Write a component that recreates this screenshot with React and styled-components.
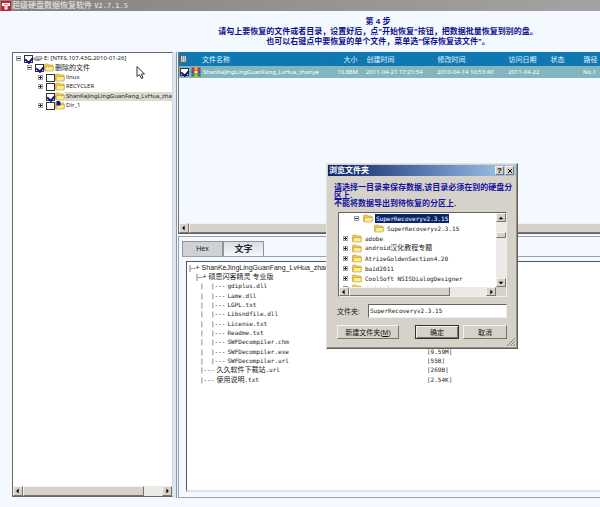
import styled, { createGlobalStyle, css } from "styled-components";

const SANS = '"Liberation Sans", "Noto Sans CJK SC", sans-serif';
const TAHOMA = '"Noto Sans", "Noto Sans CJK SC", sans-serif';
const SONG = '"DejaVu Sans Mono", "Noto Sans CJK SC", monospace';

const treeNodes = [
    { id: "e", depth: 0, toggle: "minus", checked: true, icon: "disk", label: "E: [NTFS,107.43G,2010-01-26]" },
    { id: "deleted", depth: 1, toggle: "minus", checked: true, icon: "folder", label: <Han>删除的文件</Han> },
    { id: "linux", depth: 2, toggle: "plus", icon: "folder", label: "linux" },
    { id: "recycler", depth: 2, toggle: "plus", icon: "folder", label: "RECYCLER" },
    { id: "shan", depth: 2, checked: true, selected: true, icon: "folder", label: "ShanKeJingLingGuanFang_LvHua_zha" },
    { id: "dir1", depth: 2, toggle: "plus", icon: "lost", label: "Dir_1" },
];

const previewLines = [
    { indent: 0, branch: "|--+", folder: true, name: "ShanKeJingLingGuanFang_LvHua_zhan" },
    { indent: 7, branch: "|--+", folder: true, name: <Han>硕思闪客精灵 专业版</Han> },
    { indent: 11, pipe: true, branch: "|---", name: "gdiplus.dll" },
    { indent: 11, pipe: true, branch: "|---", name: "Lame.dll" },
    { indent: 11, pipe: true, branch: "|---", name: "LGPL.txt" },
    { indent: 11, pipe: true, branch: "|---", name: "Libsndfile.dll" },
    { indent: 11, pipe: true, branch: "|---", name: "License.txt" },
    { indent: 11, pipe: true, branch: "|---", name: "Readme.txt" },
    { indent: 11, pipe: true, branch: "|---", name: "SWFDecompiler.chm" },
    { indent: 11, pipe: true, branch: "|---", name: "SWFDecompiler.exe", size: "[9.59M]" },
    { indent: 11, pipe: true, branch: "|---", name: "SWFDecompiler.url", size: "[55B]" },
    { indent: 11, branch: "|---", name: <><Han>久久软件下载站</Han>.url</>, size: "[269B]" },
    { indent: 11, branch: "|---", name: <><Han>使用说明</Han>.txt</>, size: "[2.54K]" },
];

const folders = [
    { id: "sr", depth: 1, toggle: "minus", label: "SuperRecoveryv2.3.15", selected: true },
    { id: "sr2", depth: 2, label: "SuperRecoveryv2.3.15" },
    { id: "adobe", depth: 0, toggle: "plus", label: "adobe" },
    { id: "android", depth: 0, toggle: "plus", label: <>android<Han>汉化教程专题</Han></> },
    { id: "atrize", depth: 0, toggle: "plus", label: "AtrizeGoldenSection4.20" },
    { id: "baid", depth: 0, toggle: "plus", label: "baid2011" },
    { id: "cool", depth: 0, toggle: "plus", label: "CoolSoft NSISDialogDesigner" },
    { id: "dsdata", depth: 0, toggle: "plus", label: "dsdata1" },
];

function Han({ children }) {
    return <HanText>{children}</HanText>;
}

function FolderIcon({ lost }) {
    return (
        <svg width="10" height="9" viewBox="0 0 20 18" aria-hidden="true">
            <path d="M1 4 Q1 2 3 2 H8 L10 4 H17 Q18 4 18 6 V15 H2 Q1 15 1 14 Z" fill="#f0cf52" stroke="#a88a2a" />
            <path d="M3 7 H19 L18 16 H2 Z" fill="#fdec8a" stroke="#a88a2a" />
            {lost && <path d="M3 0 H9 L11 3 V9 H3 Z" fill="#14148c" />}
        </svg>
    );
}

function DiskIcon() {
    return (
        <svg width="10" height="9" viewBox="0 0 20 18" aria-hidden="true">
            <path d="M1 9 L6 5 H17 L19 9 L13 13 H4 Z" fill="#c9c9c9" stroke="#7a7a7a" />
            <path d="M2 10 L13 11 L19 9" fill="none" stroke="#5a5a5a" />
            <path d="M9 12 H12" stroke="#2c7a2c" strokeWidth="2" />
        </svg>
    );
}

function ArchiveIcon() {
    return (
        <svg width="10" height="10" viewBox="0 0 20 20" aria-hidden="true">
            <rect x="1" y="1" width="18" height="6" fill="#c2323c" />
            <rect x="1" y="7" width="18" height="6" fill="#2c50b4" />
            <rect x="1" y="13" width="18" height="6" fill="#2a8c3c" />
            <rect x="7" y="0" width="6" height="20" fill="#e8a83c" />
            <rect x="6" y="7" width="8" height="6" fill="#f6e08a" stroke="#8a5a18" />
        </svg>
    );
}

function Arrow({ dir }) {
    const paths = {
        left: "M6 1 V9 L2 5 Z",
        right: "M4 1 V9 L8 5 Z",
        up: "M1 7 H9 L5 3 Z",
        down: "M1 3 H9 L5 7 Z",
    };
    return (
        <svg width="6" height="6" viewBox="0 0 10 10" aria-hidden="true">
            <path d={paths[dir]} fill="#000" />
        </svg>
    );
}

function HScroll({ grow, rest, open }) {
    return (
        <ScrollTrack>
            <ScrollButton aria-label="向左滚动"><Arrow dir="left" /></ScrollButton>
            <Thumb $grow={grow} $open={open} />
            {!open && (
                <>
                    <TrackRest $grow={rest} />
                    <ScrollButton aria-label="向右滚动"><Arrow dir="right" /></ScrollButton>
                </>
            )}
        </ScrollTrack>
    );
}

function DriveTree() {
    return (
        <TreePanel>
            <TreeList>
                {treeNodes.map((n) => (
                    <TreeRow key={n.id} $depth={n.depth}>
                        {n.toggle ? <Toggle aria-label="展开" $plus={n.toggle === "plus"} /> : <ToggleGap />}
                        <TreeLabel>
                            <Check type="checkbox" defaultChecked={n.checked} />
                            {n.icon === "disk" ? <DiskIcon /> : <FolderIcon lost={n.icon === "lost"} />}
                            <TreeText $selected={n.selected}>{n.label}</TreeText>
                        </TreeLabel>
                    </TreeRow>
                ))}
            </TreeList>
            <HScroll grow={123} rest={19} />
        </TreePanel>
    );
}

function FileList() {
    return (
        <ListPanel>
            <TableArea>
                <FileTable>
                    <colgroup>
                        <col width="11" />
                        <col width="134" />
                        <col width="38" />
                        <col width="71" />
                        <col width="71" />
                        <col width="42" />
                        <col width="35" />
                        <col />
                    </colgroup>
                    <thead>
                        <tr>
                            <th><HeadMark aria-label="全选" /></th>
                            <th><NameHead>文件名称</NameHead></th>
                            <NumHead>大小</NumHead>
                            <th>创建时间</th>
                            <th>修改时间</th>
                            <th>访问日期</th>
                            <th>状态</th>
                            <PathHead>路径</PathHead>
                        </tr>
                    </thead>
                    <tbody>
                        <tr>
                            <td><Check type="checkbox" defaultChecked aria-label="选择文件" /></td>
                            <td>
                                <NameCell>
                                    <ArchiveIcon />
                                    ShanKeJingLingGuanFang_LvHua_zhanye
                                </NameCell>
                            </td>
                            <NumCell>10.88M</NumCell>
                            <td>2011-04-21 17:21:54</td>
                            <td>2010-04-14 10:53:40</td>
                            <td>2011-04-22</td>
                            <td />
                            <PathCell>No.1</PathCell>
                        </tr>
                    </tbody>
                </FileTable>
            </TableArea>
            <HScroll grow={1} open />
        </ListPanel>
    );
}

function Preview() {
    return (
        <PreviewPanel>
            <Tabs role="tablist">
                <Tab role="tab" aria-selected="false">Hex</Tab>
                <Tab role="tab" aria-selected="true" $active>文字</Tab>
            </Tabs>
            <TabPage>
                <TextBox>
                    {previewLines.map((l, i) => (
                        <TextLine key={i}>
                            <LineName $indent={l.indent} $folder={l.folder}>
                                {l.pipe && <Pipe>|</Pipe>}
                                <Branch>{l.branch}</Branch>
                                {l.name}
                            </LineName>
                            <span>{l.size}</span>
                        </TextLine>
                    ))}
                </TextBox>
            </TabPage>
        </PreviewPanel>
    );
}

function BrowseDialog() {
    return (
        <Dialog role="dialog" aria-labelledby="dialog-title">
            <DialogTitle>
                <span id="dialog-title">浏览文件夹</span>
                <TitleButton aria-label="帮助">?</TitleButton>
                <TitleButton aria-label="关闭">
                    <svg width="6" height="6" viewBox="0 0 6 6" aria-hidden="true">
                        <path d="M1 1 L5 5 M5 1 L1 5" stroke="#000" />
                    </svg>
                </TitleButton>
            </DialogTitle>
            <DialogBody>
                <Notice>
                    请选择一目录来保存数据,该目录必须在别的硬盘分<br />
                    区上.<br />
                    不能将数据导出到待恢复的分区上.
                </Notice>
                <FolderBox>
                    <FolderView>
                        <FolderList>
                            {folders.map((f) => (
                                <FolderRow key={f.id} $depth={f.depth}>
                                    {f.toggle ? <Toggle aria-label="展开" $plus={f.toggle === "plus"} /> : <ToggleGap />}
                                    <FolderIcon />
                                    <FolderText $selected={f.selected}>{f.label}</FolderText>
                                </FolderRow>
                            ))}
                        </FolderList>
                        <VScroll>
                            <ScrollButton aria-label="向上滚动"><Arrow dir="up" /></ScrollButton>
                            <TrackRest $grow={10} />
                            <VThumb />
                            <TrackRest $grow={40} />
                            <ScrollButton aria-label="向下滚动"><Arrow dir="down" /></ScrollButton>
                        </VScroll>
                    </FolderView>
                    <BottomScroll>
                        <HScroll grow={101} rest={37} />
                        <Corner />
                    </BottomScroll>
                </FolderBox>
                <Field>
                    <label htmlFor="folder">文件夹:</label>
                    <FieldInput id="folder" defaultValue="SuperRecoveryv2.3.15" />
                </Field>
                <Buttons>
                    <WideButton>新建文件夹(<u>M</u>)</WideButton>
                    <DialogButton $primary>确定</DialogButton>
                    <DialogButton>取消</DialogButton>
                </Buttons>
            </DialogBody>
            <Grip width="8" height="8" viewBox="0 0 8 8" aria-hidden="true">
                <path d="M8 0 L0 8 M8 3 L3 8 M8 6 L6 8" stroke="#85827a" />
            </Grip>
        </Dialog>
    );
}

function App() {
    return (
        <Page>
            <GlobalStyle />
            <TitleBar>
                <svg width="10" height="10" viewBox="0 0 20 20" aria-hidden="true">
                    <rect width="20" height="20" fill="#c8202c" />
                    <path d="M2 4 H18 V10 H13 V17 H7 V10 H2 Z" fill="#fff" />
                    <path d="M5 7 H15 M10 9 V14" stroke="#c8202c" />
                </svg>
                <h1>超级硬盘数据恢复软件 <Version>V2.7.1.5</Version></h1>
            </TitleBar>
            <Steps>
                <p>第 4 步</p>
                <p>请勾上要恢复的文件或者目录，设置好后，点"开始恢复"按钮，把数据批量恢复到别的盘。</p>
                <p>也可以右键点中要恢复的单个文件，菜单选"保存恢复该文件"。</p>
            </Steps>
            <Main>
                <DriveTree />
                <Splitter />
                <RightColumn>
                    <FileList />
                    <Preview />
                </RightColumn>
            </Main>
            <BrowseDialog />
            <Pointer width="10" height="14" viewBox="0 0 20 28" aria-hidden="true">
                <path d="M2 1 V21 L7 17 L11 25 L14 24 L11 16 H17 Z" fill="#fff" stroke="#333" strokeWidth="2" />
            </Pointer>
        </Page>
    );
}

export default App;

const GlobalStyle = createGlobalStyle`
    * {
        box-sizing: border-box;
    }
    body {
        margin: 0;
        background: #f3f9ff;
        overflow: hidden;
    }
    h1, p, ul {
        margin: 0;
        padding: 0;
    }
    ul {
        list-style: none;
    }
    button, input {
        font: inherit;
        margin: 0;
        padding: 0;
    }
    svg {
        flex: none;
    }
`
const raised = css`
    background: #d6d2ca;
    border: 1px solid;
    border-color: #f4f2ee #77746e #77746e #f4f2ee;
`
const Page = styled.div`
    position: relative;
    display: flex;
    flex-direction: column;
    height: 100vh;
    overflow: hidden;
    background: #f3f9ff;
    color: #222;
    font-family: ${SANS};
    font-size: 7px;
    line-height: 9px;
    white-space: nowrap;
`
const TitleBar = styled.header`
    display: flex;
    align-items: center;
    gap: 1px;
    height: 11px;
    padding-left: 1px;
    background: linear-gradient(90deg, #85837f, #a3a3a3);
    h1{
        color: #d6d4ce;
        font-size: 8px;
        line-height: 11px;
        font-weight: bold;
    }
`
const Version = styled.span`
    font-family: ${SONG};
    font-size: 7px;
`
const Steps = styled.div`
    padding: 6px 0 5px 156px;
    text-align: center;
    color: #10108c;
    font-size: 8px;
    line-height: 10px;
    font-weight: bold;
`
const Main = styled.main`
    display: flex;
    flex: 1;
    min-height: 0;
    margin: 0 0 9px 12px;
`
const HanText = styled.span`
    font-size: 7px;
`

/* scroll bars */
const ScrollTrack = styled.div`
    display: flex;
    flex: 1;
    max-height: 10px;
    min-height: 9px;
    background: #eceae6;
`
const ScrollButton = styled.button`
    ${raised}
    display: flex;
    align-items: center;
    justify-content: center;
    flex: none;
    width: 10px;
    min-height: 9px;
`
const Thumb = styled.div`
    ${raised}
    flex: ${({ $grow }) => $grow};
    ${({ $open }) => $open && css`
        border-right: 0;
    `}
`
const TrackRest = styled.div`
    flex: ${({ $grow }) => $grow};
`

/* left tree */
const TreePanel = styled.section`
    display: flex;
    flex-direction: column;
    width: 161px;
    flex: none;
    margin-bottom: 1px;
    background: #fff;
    border: 1px solid #66686c;
    border-right-color: #d8d8d8;
`
const TreeList = styled.ul`
    flex: 1;
    padding-top: 1px;
    overflow: hidden;
    font-family: ${TAHOMA};
    font-size: 6px;
`
const TreeRow = styled.li`
    display: flex;
    align-items: center;
    gap: 3px;
    height: 9px;
    padding-left: ${({ $depth }) => 3 + $depth * 11}px;
    &:nth-child(2n){
        margin-bottom: 1px;
    }
`
const Toggle = styled.button`
    flex: none;
    width: 5px;
    height: 5px;
    border: 1px solid #a0a0a0;
    background:
        linear-gradient(#222, #222) center / 3px 1px no-repeat,
        linear-gradient(#222, #222) center / 1px ${({ $plus }) => ($plus ? 3 : 1)}px no-repeat,
        #fff;
`
const ToggleGap = styled.span`
    flex: none;
    width: 5px;
`
const TreeLabel = styled.label`
    display: flex;
    align-items: center;
    flex: 1;
    min-width: 0;
`
const Check = styled.input`
    appearance: none;
    flex: none;
    display: flex;
    justify-content: center;
    width: 9px;
    height: 8px;
    border: 1px solid #333;
    background: #fff;
    &:checked::after{
        content: "";
        width: 4px;
        height: 5px;
        border: solid #101090;
        border-width: 0 2px 2px 0;
        transform: rotate(40deg);
    }
`
const TreeText = styled.span`
    flex: ${({ $selected }) => ($selected ? 1 : "none")};
    padding-left: 1px;
    background: ${({ $selected }) => ($selected ? "#dedad2" : "none")};
`
const Splitter = styled.div`
    width: 4px;
    flex: none;
    background: #dfe7f2;
    border-right: 1px solid #8d97a6;
`

/* file table */
const RightColumn = styled.div`
    display: flex;
    flex-direction: column;
    flex: 1;
    min-width: 0;
    padding-left: 1px;
`
const ListPanel = styled.section`
    display: flex;
    flex-direction: column;
    height: 182px;
    border-left: 1px solid #70757c;
    border-bottom: 1px solid #5f6164;
`
const TableArea = styled.div`
    flex: 1;
    overflow: hidden;
`
const FileTable = styled.table`
    width: 100%;
    table-layout: fixed;
    border-collapse: collapse;
    th, td{
        padding: 0 0 0 4px;
        text-align: left;
        font-weight: normal;
    }
    th{
        height: 14px;
        background: #0d78b3;
        color: #e4f1f9;
        border-right: 1px solid #2f6f97;
    }
    td{
        height: 12px;
        background: #82b5bd;
        color: #fff;
        font-family: ${TAHOMA};
        font-size: 6px;
    }
    th:first-child, td:first-child, td:nth-child(2){
        padding-left: 1px;
    }
    th:first-child, th:last-child{
        border-right: 0;
    }
`
const NumHead = styled.th`
    && {
        text-align: right;
        padding-right: 4px;
    }
`
const NumCell = styled.td`
    && {
        text-align: right;
        padding: 0 4px 0 0;
    }
`
const PathHead = styled.th`
    && {
        padding-left: 2px;
    }
`
const PathCell = styled.td`
    && {
        padding-left: 2px;
    }
`
const HeadMark = styled.button`
    display: block;
    width: 7px;
    height: 8px;
    border: 1px solid #5c6468;
    background: repeating-linear-gradient(90deg, #c9cdd0 0 1px, #9aa2a6 1px 2px);
`
const NameHead = styled.span`
    margin-left: 8px;
`
const NameCell = styled.span`
    display: flex;
    align-items: center;
    gap: 2px;
`

/* preview */
const PreviewPanel = styled.section`
    display: flex;
    flex-direction: column;
    flex: 1;
    min-height: 0;
    margin-top: 2px;
    padding: 4px 0 0 3px;
    border: 1px solid #99a1ac;
    border-right: 0;
`
const Tabs = styled.div`
    display: flex;
    height: 15px;
`
const Tab = styled.button`
    width: 41px;
    border: 1px solid #8f959d;
    border-bottom: 0;
    background: ${({ $active }) => ($active ? "linear-gradient(#d9dde2, #f3f9ff)" : "#cfd1d4")};
    color: #222;
    font-size: ${({ $active }) => ($active ? 9 : 7)}px;
    font-weight: ${({ $active }) => ($active ? "bold" : "normal")};
    line-height: 12px;
`
const TabPage = styled.div`
    flex: 1;
    display: flex;
    padding: 4px 0 5px 4px;
    border-top: 1px solid #9aa0a8;
`
const TextBox = styled.ul`
    flex: 1;
    padding: 1px 0 0 2px;
    background: #fff;
    border: 1px solid #55585c;
    border-right: 0;
    border-bottom: 2px solid #e0e4e8;
    overflow: hidden;
    font-family: ${SONG};
    font-size: 6px;
`
const TextLine = styled.li`
    display: grid;
    grid-template-columns: 238px auto;
    height: 9px;
    &:nth-child(3n){
        margin-bottom: 1px;
    }
`
const LineName = styled.span`
    padding-left: ${({ $indent }) => $indent}px;
    ${({ $folder }) => $folder && css`
        font-family: ${SANS};
        font-size: 7px;
    `}
`
const Pipe = styled.span`
    display: inline-block;
    width: 11px;
`
const Branch = styled.span`
    margin-right: 2px;
`

/* browse window */
const Dialog = styled.div`
    position: absolute;
    left: 326px;
    top: 163px;
    width: 192px;
    padding: 1px;
    background: #d6d2ca;
    border: 1px solid;
    border-color: #e6e4de #5f5d58 #5f5d58 #e6e4de;
    box-shadow: inset -1px -1px 0 #96938c;
`
const DialogTitle = styled.div`
    display: flex;
    align-items: center;
    gap: 1px;
    height: 11px;
    padding: 0 2px 0 1px;
    background: linear-gradient(90deg, #0a246a, #a6caf0);
    color: #fff;
    font-size: 8px;
    font-weight: bold;
    span{
        flex: 1;
    }
`
const TitleButton = styled.button`
    ${raised}
    display: flex;
    align-items: center;
    justify-content: center;
    width: 9px;
    height: 9px;
    color: #000;
    line-height: 7px;
`
const DialogBody = styled.div`
    padding: 4px 9px 8px;
`
const Notice = styled.p`
    height: 27px;
    margin: 0 -8px 5px -3px;
    padding-top: 4px;
    overflow: hidden;
    color: #1414a0;
    font-size: 8px;
    line-height: 8px;
    font-weight: bold;
`
const FolderBox = styled.div`
    margin-left: 1px;
    background: #fff;
    border: 1px solid;
    border-color: #66645f #f0eee9 #f0eee9 #66645f;
`
const FolderView = styled.div`
    display: flex;
    height: 74px;
`
const FolderList = styled.ul`
    flex: 1;
    overflow: hidden;
    font-family: ${SONG};
    font-size: 6px;
`
const FolderRow = styled.li`
    display: flex;
    align-items: center;
    gap: 4px;
    height: 10px;
    padding-left: ${({ $depth }) => 4 + $depth * 11}px;
`
const FolderText = styled.span`
    margin-left: -2px;
    padding: 0 1px;
    background: ${({ $selected }) => ($selected ? "#0a246a" : "none")};
    color: ${({ $selected }) => ($selected ? "#fff" : "#222")};
`
const VScroll = styled.div`
    display: flex;
    flex-direction: column;
    width: 10px;
    background: #eceae6;
`
const VThumb = styled.div`
    ${raised}
    height: 6px;
`
const BottomScroll = styled.div`
    display: flex;
`
const Corner = styled.div`
    width: 10px;
    background: #d6d2ca;
`
const Field = styled.div`
    display: flex;
    align-items: center;
    justify-content: space-between;
    margin-top: 7px;
`
const FieldInput = styled.input`
    width: 139px;
    height: 14px;
    padding: 0 1px 2px;
    background: #fff;
    border: 1px solid;
    border-color: #66645f #f0eee9 #f0eee9 #66645f;
    color: #222;
    font-family: ${SONG};
    font-size: 6px;
`
const Buttons = styled.div`
    display: flex;
    gap: 4px;
    margin-top: 7px;
`
const DialogButton = styled.button`
    ${raised}
    width: 44px;
    height: 14px;
    color: #111;
    line-height: 11px;
    ${({ $primary }) => $primary && css`
        border-color: #333;
        box-shadow: inset 1px 1px 0 #f4f2ee, inset -1px -1px 0 #77746e;
    `}
`
const WideButton = styled(DialogButton)`
    width: 62px;
    margin-right: auto;
`
const Grip = styled.svg`
    position: absolute;
    right: 2px;
    bottom: 2px;
`
const Pointer = styled.svg`
    position: absolute;
    left: 136px;
    top: 66px;
`
